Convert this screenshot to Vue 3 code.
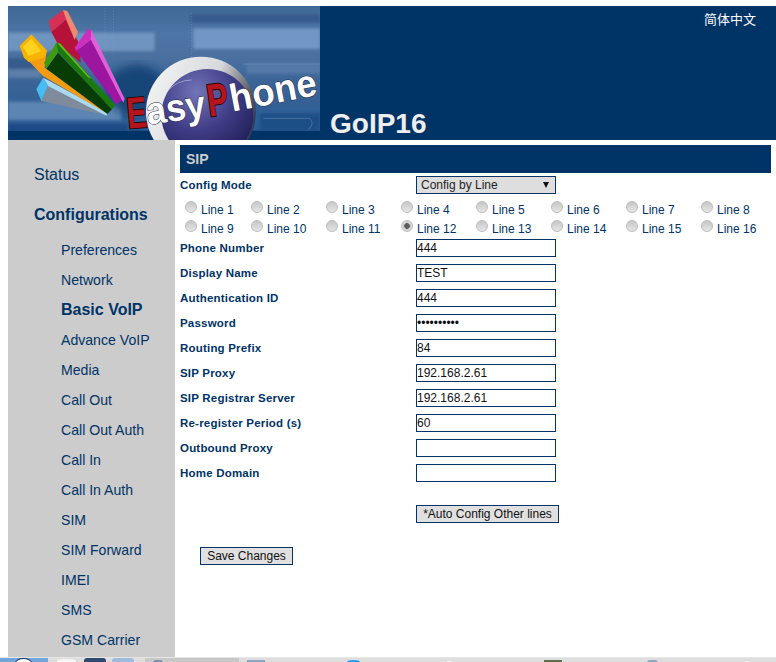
<script setup>
const lines = Array.from({ length: 16 }, (_, i) => 'Line ' + (i + 1))
const fields = [
  { label: 'Phone Number', value: '444', type: 'text' },
  { label: 'Display Name', value: 'TEST', type: 'text' },
  { label: 'Authentication ID', value: '444', type: 'text' },
  { label: 'Password', value: '1234567890', type: 'password' },
  { label: 'Routing Prefix', value: '84', type: 'text' },
  { label: 'SIP Proxy', value: '192.168.2.61', type: 'text' },
  { label: 'SIP Registrar Server', value: '192.168.2.61', type: 'text' },
  { label: 'Re-register Period (s)', value: '60', type: 'text' },
  { label: 'Outbound Proxy', value: '', type: 'text' },
  { label: 'Home Domain', value: '', type: 'text' }
]
const subNav = ['Preferences', 'Network', 'Basic VoIP', 'Advance VoIP', 'Media', 'Call Out', 'Call Out Auth', 'Call In', 'Call In Auth', 'SIM', 'SIM Forward', 'IMEI', 'SMS', 'GSM Carrier']
</script>

<template>
  <div class="page">
    <header class="header">
      <svg class="logo" viewBox="24 18 936 402" width="312" height="134">
        <defs>
          <linearGradient id="sky" x1="0" y1="0" x2="0" y2="1">
            <stop offset="0" stop-color="#3f6896" />
            <stop offset="0.22" stop-color="#4d75a5" />
            <stop offset="0.42" stop-color="#4a709f" />
            <stop offset="0.62" stop-color="#3a6496" />
            <stop offset="1" stop-color="#2a5a94" />
          </linearGradient>
          <radialGradient id="orb" cx="0.38" cy="0.25" r="0.85">
            <stop offset="0" stop-color="#7274b8" />
            <stop offset="0.5" stop-color="#3f3c86" />
            <stop offset="1" stop-color="#1b1a4e" />
          </radialGradient>
          <linearGradient id="rim" x1="0" y1="0.2" x2="1" y2="0.6">
            <stop offset="0" stop-color="#f4f4f4" />
            <stop offset="0.55" stop-color="#d6d8dc" />
            <stop offset="0.85" stop-color="#5c5e66" />
            <stop offset="1" stop-color="#2c3a58" />
          </linearGradient>
          <filter id="soft"><feGaussianBlur stdDeviation="5" /></filter>
          <filter id="softer"><feGaussianBlur stdDeviation="14" /></filter>
          <clipPath id="pic"><rect x="24" y="18" width="936" height="402" /></clipPath>
          <clipPath id="sky-clip"><rect x="24" y="18" width="936" height="374" /></clipPath>
        </defs>
        <rect x="24" y="18" width="936" height="402" fill="#003366" />
        <rect x="24" y="18" width="936" height="374" fill="url(#sky)" />
        <g clip-path="url(#sky-clip)">
          <g filter="url(#soft)">
            <rect x="24" y="98" width="440" height="55" fill="#7094c0" />
            <rect x="580" y="85" width="380" height="62" fill="#7197c6" />
            <rect x="570" y="42" width="390" height="26" fill="#345c8c" />
            <rect x="24" y="175" width="110" height="32" fill="#345c8c" />
            <rect x="24" y="208" width="100" height="25" fill="#5c7fa9" />
            <rect x="740" y="190" width="220" height="30" fill="#557aa9" />
            <rect x="24" y="305" width="340" height="55" fill="#5d85b3" />
            <rect x="24" y="372" width="360" height="24" fill="#1a4c86" />
            <rect x="780" y="340" width="180" height="52" fill="#1f4f86" />
          </g>
          <ellipse cx="410" cy="270" rx="90" ry="75" fill="#174478" filter="url(#softer)" />
          <path d="M315 25 V170 M340 25 V170 M575 40 V180" stroke="#8aa6c8" stroke-width="2" stroke-dasharray="3 5" fill="none" opacity="0.6" />
          <path d="M730 192 H960 M790 355 H930 Q945 375 925 388" stroke="#86a4c8" stroke-width="2" fill="none" opacity="0.6" />
        </g>
        <g clip-path="url(#pic)">
          <circle cx="603" cy="335" r="165" fill="url(#rim)" />
          <circle cx="622" cy="345" r="138" fill="url(#orb)" />
          <path d="M505 270 Q535 240 575 240" fill="none" stroke="#b9bce0" stroke-width="2" />
        </g>
        <g transform="translate(24 18)">
          <!-- gray bar -->
          <polygon points="100,285 120,235 298,328" fill="#7f8b9b" />
          <polygon points="105,215 125,225 300,320 295,329 120,240" fill="#a9d9f0" />
          <polygon points="105,215 85,250 100,285 120,238" fill="#45bdf0" />
          <!-- orange bar -->
          <polygon points="48,150 75,110 115,140 110,185 300,310 290,318 105,210" fill="#f39c12" />
          <polygon points="35,120 70,85 118,135 108,155 62,168 48,155" fill="#f6b400" />
          <polygon points="45,122 70,98 100,135 62,150" fill="#ffd21f" />
          <!-- red bar -->
          <polygon points="130,78 175,40 215,115 218,170 150,115" fill="#b5123a" />
          <polygon points="122,45 165,12 175,40 130,78" fill="#d72f55" />
          <polygon points="165,12 178,15 210,78 200,102 175,42" fill="#ee8872" />
          <!-- green bar -->
          <polygon points="115,188 150,140 312,310 298,324" fill="#083c05" />
          <polygon points="108,170 145,110 150,138 115,188" fill="#3f9a10" />
          <polygon points="145,110 156,112 322,298 312,310 150,138" fill="#1a7a0b" />
          <polygon points="148,112 156,112 250,218 240,214" fill="#6ab81a" />
          <!-- purple bar -->
          <polygon points="205,135 250,100 348,280 325,295" fill="#9c16a0" />
          <polygon points="200,125 240,68 250,72 250,100 205,135" fill="#cc2ebe" />
          <polygon points="250,72 350,278 346,290 248,100" fill="#e060d6" />
        </g>
        <text class="tx red" transform="translate(384 386) rotate(-5) scale(0.78 1.15)">E</text>
        <text class="tx white" transform="translate(444 374) rotate(-8) scale(0.93 1)">asy</text>
        <text class="tx red" transform="translate(628 350) rotate(-8) scale(0.82 1.2)">P</text>
        <text class="tx white" transform="translate(697 335) rotate(-11) scale(0.96 1)">hone</text>
      </svg>
      <div class="title-area">
        <a class="lang">简体中文</a>
        <h1 class="title">GoIP16</h1>
      </div>
    </header>

    <div class="content">
      <nav class="sidebar">
        <a class="nav-top">Status</a>
        <a class="nav-top nav-active">Configurations</a>
        <a v-for="item in subNav" :key="item" class="nav-sub" :class="{ current: item === 'Basic VoIP' }">{{ item }}</a>
      </nav>

      <main class="main">
        <h2 class="section">SIP</h2>
        <div class="row config-row">
          <label class="field-label">Config Mode</label>
          <div class="select">Config by Line<span class="arrow"></span></div>
        </div>
        <div class="lines">
          <label v-for="(line, i) in lines" :key="line" class="line">
            <input class="radio" type="radio" name="line" :checked="i === 11" />
            <span>{{ line }}</span>
          </label>
        </div>
        <div class="fields">
          <div v-for="f in fields" :key="f.label" class="row field-row">
            <label class="field-label">{{ f.label }}</label>
            <input class="text-input" :type="f.type" :value="f.value" />
          </div>
        </div>
        <div class="row auto-row">
          <span></span>
          <button class="btn auto">*Auto Config Other lines</button>
        </div>
        <button class="btn save">Save Changes</button>
      </main>
    </div>

    <footer class="taskbar">
      <span class="start"><i class="start-orb"></i></span>
      <i class="tray t1"></i>
      <i class="tray t2"></i>
      <i class="tray t3"></i>
      <span class="task-active"><i class="task-icon"></i></span>
      <i class="tray t4"></i>
      <i class="tray t5"></i>
      <i class="tray t6"></i>
      <i class="tray t7"></i>
      <i class="tray t8"></i>
      <i class="tray t9"></i>
    </footer>
  </div>
</template>

<style>
html, body { margin: 0; background: #fff; overflow: hidden; }
</style>

<style scoped>
.page {
  width: 776px;
  height: 662px;
  overflow: hidden;
  padding-top: 6px;
  box-sizing: border-box;
  display: flex;
  flex-direction: column;
  font-family: "Liberation Sans", Arial, sans-serif;
  color: #003366;
}
.header {
  display: flex;
  height: 134px;
  margin-left: 8px;
  background: #003366;
  flex: none;
}
.logo { display: block; flex: none; }
.tx { font: bold 115px "Liberation Sans", sans-serif; paint-order: stroke; }
.red { fill: #b5141c; stroke: #200808; stroke-width: 5px; }
.white { fill: #fff; stroke: #23233f; stroke-width: 3px; }
.title-area {
  flex: 1;
  display: flex;
  flex-direction: column;
  justify-content: space-between;
  padding: 5px 20px 0 10px;
}
.lang {
  align-self: flex-end;
  color: #fff;
  font: 13px/15px "Noto Sans CJK SC", sans-serif;
}
.title {
  margin: 0;
  font-size: 28px;
  line-height: 32px;
  font-weight: bold;
  color: #eeeeee;
}
.content { flex: 1; display: flex; min-height: 0; }
.sidebar {
  width: 167px;
  margin-left: 8px;
  background: #cccccc;
  flex: none;
  display: flex;
  flex-direction: column;
  padding-top: 20px;
  box-sizing: border-box;
}
.nav-top { font-size: 16px; line-height: 30px; padding-left: 26px; margin-bottom: 10px; }
.nav-active { font-weight: bold; margin-bottom: 5px; }
.nav-sub { font-size: 14.1px; line-height: 30px; padding-left: 53px; }
.current { font-size: 16px; font-weight: bold; }
.main {
  width: 591px;
  margin: 5px 0 0 5px;
  flex: none;
  font-size: 12px;
}
.section {
  margin: 0;
  height: 28px;
  line-height: 28px;
  padding-left: 6px;
  background: #003366;
  color: #cccccc;
  font-size: 14px;
  font-weight: bold;
}
.row {
  display: grid;
  grid-template-columns: 236px 1fr;
  align-items: start;
}
.config-row { margin-top: 3px; height: 18px; }
.field-label { font-size: 11.5px; line-height: 18px; font-weight: bold; letter-spacing: 0.2px; }
.select {
  width: 140px;
  height: 18px;
  box-sizing: border-box;
  border: 1px solid #003366;
  background: #dedede;
  color: #222;
  line-height: 16px;
  padding-left: 4px;
  position: relative;
}
.arrow {
  position: absolute;
  right: 6px;
  top: 5px;
  border: 3.5px solid transparent;
  border-top: 6px solid #111;
  border-bottom: 0;
}
.lines {
  display: grid;
  grid-template-columns: 66px repeat(7, 75px);
  grid-auto-rows: 19px;
  padding: 5px 0 0 5px;
}
.line { display: flex; align-items: flex-start; gap: 4px; line-height: 16px; padding-top: 2px; }
.line span { padding-top: 1px; }
.radio {
  appearance: none;
  margin: 0;
  width: 12px;
  height: 12px;
  border-radius: 50%;
  border: 1px solid #bdbdbd;
  background: linear-gradient(#c6c6c6, #e6e6e6);
  box-sizing: border-box;
  flex: none;
}
.radio:checked { background: radial-gradient(circle, #5c5c5c 0 2.5px, #b8b8b8 3px, #d8d8d8 4px); }
.fields { margin-top: 2px; }
.field-row { height: 25px; }
.text-input {
  width: 140px;
  height: 18px;
  box-sizing: border-box;
  border: 1px solid #003366;
  padding: 0;
  font: 12px "Liberation Sans", sans-serif;
  color: #111;
  background: #fff;
  outline: none;
  border-radius: 0;
}
.auto-row { margin-top: 16px; }
.btn {
  border: 1px solid #003366;
  background: #e0e0e0;
  color: #111;
  font: 12px/16px "Liberation Sans", sans-serif;
  height: 18px;
  padding: 0;
  box-sizing: border-box;
  border-radius: 0;
}
.auto { width: 143px; }
.save { width: 93px; margin: 24px 0 0 20px; display: block; }
.taskbar {
  height: 5px;
  flex: none;
  background: #dedede;
  border-top: 1px solid #e6e6e6;
  box-sizing: border-box;
  display: flex;
  overflow: hidden;
}
.start { width: 48px; background: #6fa6dc; position: relative; flex: none; }
.start-orb {
  position: absolute;
  left: 15px;
  top: 0;
  width: 17px;
  height: 10px;
  border: 1px solid #12305a;
  background: #fff;
  border-radius: 50%;
  box-sizing: border-box;
}
.tray { height: 4px; flex: none; background: #999; border-radius: 3px 3px 0 0; }
.t1 { margin: 1px 0 0 9px; width: 19px; background: #f6f6f6; border-radius: 50% 50% 0 0; }
.t2 { margin-left: 8px; width: 22px; background: #2f4a6f; }
.t3 { margin-left: 6px; width: 22px; background: #9fbcde; }
.task-active { width: 94px; margin-left: 11px; background: #c8c8c8; flex: none; position: relative; }
.task-icon { position: absolute; left: 8px; top: 2px; width: 10px; height: 3px; background: #7b93ad; border-radius: 3px 3px 0 0; }
.t4 { margin: 2px 0 0 8px; width: 18px; background: #8aa6c4; border-radius: 0; }
.t5 { margin: 2px 0 0 82px; width: 13px; background: #1e9ce6; border-radius: 50% 50% 0 0; }
.t6 { margin: 3px 0 0 86px; width: 7px; background: #f4f4f4; }
.t7 { margin: 2px 0 0 91px; width: 18px; background: #5f6e50; border-radius: 0; }
.t8 { margin: 2px 0 0 85px; width: 11px; background: #8ea6c2; }
.t9 { margin: 3px 0 0 86px; width: 6px; background: #f4f4f4; }
</style>
